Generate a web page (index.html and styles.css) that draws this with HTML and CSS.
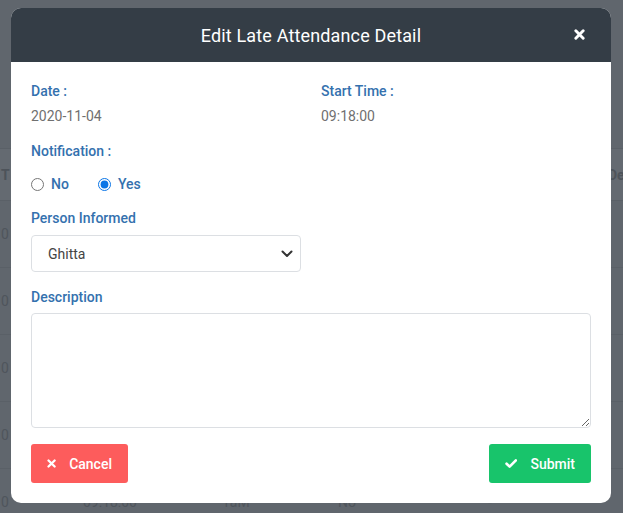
FILE: index.html
```html
<!DOCTYPE html>
<html lang="en">
<head>
<meta charset="utf-8">
<title>Edit Late Attendance Detail</title>
<link rel="stylesheet" href="styles.css">
</head>
<body>
<div class="page">
  <div class="bg-row bg-head"><span class="c1">T</span><span class="c5">De</span></div>
  <div class="bg-row"><span class="c1">0</span></div>
  <div class="bg-row"><span class="c1">0</span></div>
  <div class="bg-row"><span class="c1">0</span></div>
  <div class="bg-row"><span class="c1">0</span></div>
  <div class="bg-row"><span class="c1">0</span><span class="c2">09:18:00</span><span class="c3">1aM</span><span class="c4">No</span><span class="c6">-</span></div>
</div>

<div class="modal">
  <div class="modal-header">
    <h2 class="modal-title">Edit Late Attendance Detail</h2>
    <button class="close" type="button" aria-label="Close">
      <svg width="11" height="11" viewBox="0 0 12 12"><path d="M2 2 L10 10 M10 2 L2 10" stroke="#fff" stroke-width="3.2" stroke-linecap="round"/></svg>
    </button>
  </div>
  <div class="modal-body">
    <div class="grid">
      <div>
        <div class="label">Date :</div>
        <div class="value">2020-11-04</div>
      </div>
      <div>
        <div class="label">Start Time :</div>
        <div class="value">09:18:00</div>
      </div>
    </div>

    <div class="label sec">Notification :</div>
    <div class="radios">
      <label class="radio"><input type="radio" name="notif"> <span>No</span></label>
      <label class="radio"><input type="radio" name="notif" checked> <span>Yes</span></label>
    </div>

    <div class="label sec2">Person Informed</div>
    <div class="select">
      <span>Ghitta</span>
      <svg width="12" height="8" viewBox="0 0 12 8"><path d="M1.5 1.5 L6 6 L10.5 1.5" fill="none" stroke="#333" stroke-width="2" stroke-linecap="round" stroke-linejoin="round"/></svg>
    </div>

    <div class="label sec2">Description</div>
    <textarea class="textarea"></textarea>

    <div class="actions">
      <button class="btn btn-cancel" type="button">
        <svg width="11" height="11" viewBox="0 0 12 12"><path d="M2 2 L10 10 M10 2 L2 10" stroke="#fff" stroke-width="3" stroke-linecap="round"/></svg>
        <span>Cancel</span>
      </button>
      <button class="btn btn-submit" type="button">
        <svg width="14" height="11" viewBox="0 0 14 11"><path d="M1.8 5.8 L5.2 9 L12.2 2" fill="none" stroke="#fff" stroke-width="3" stroke-linecap="round" stroke-linejoin="round"/></svg>
        <span>Submit</span>
      </button>
    </div>
  </div>
</div>
</body>
</html>
```

FILE: styles.css
```css
* { box-sizing: border-box; }
html, body { margin: 0; padding: 0; }
body {
  width: 623px;
  height: 513px;
  overflow: hidden;
  background: #60666d;
  font-family: Roboto, "Liberation Sans", Arial, sans-serif;
  position: relative;
}

/* background page (dimmed) */
.page {
  padding-top: 148px;
  color: #4f555c;
  font-size: 14px;
}
.bg-row {
  height: 67px;
  border-top: 1px solid #5a6067;
  display: flex;
  align-items: center;
  position: relative;
}
.bg-head {
  height: 52px;
  background: #646a71;
  font-weight: 700;
  color: #4d535a;
}
.bg-row span { position: absolute; }
.c1 { left: 1px; }
.c2 { left: 83px; }
.c3 { left: 222px; }
.c4 { left: 338px; }
.c5 { left: 608px; }
.c6 { left: 488px; }

/* modal */
.modal {
  position: absolute;
  left: 11px;
  top: 8px;
  width: 600px;
  background: #fff;
  border-radius: 10px;
  overflow: hidden;
}
.modal-header {
  height: 54px;
  background: #343d46;
  display: flex;
  align-items: center;
  justify-content: center;
  position: relative;
}
.modal-title {
  margin: 0;
  color: #fff;
  font-size: 18px;
  font-weight: 400;
  letter-spacing: 0.15px;
}
.close {
  position: absolute;
  right: 26px;
  top: 21px;
  background: none;
  border: 0;
  padding: 0;
  width: 11px;
  height: 11px;
  display: flex;
}

.modal-body {
  padding: 20px 20px 20px 20px;
}
.grid {
  display: grid;
  grid-template-columns: 270px 270px;
  column-gap: 20px;
}
.label {
  color: #3471ae;
  font-size: 14px;
  line-height: 18px;
  font-weight: 500;
}
.value {
  color: #707070;
  font-size: 14px;
  line-height: 18px;
  margin-top: 7px;
}
.sec { margin-top: 17px; }
.sec2 { margin-top: 16px; }

.radios {
  display: flex;
  align-items: center;
  margin-top: 15px;
  height: 18px;
  gap: 29px;
}
.radio {
  display: flex;
  align-items: center;
  gap: 7px;
  color: #3471ae;
  font-size: 14px;
  font-weight: 500;
}
.radio input {
  margin: 0;
  width: 13px;
  height: 13px;
  accent-color: #0a75e6;
}

.select {
  margin-top: 8px;
  width: 270px;
  height: 37px;
  border: 1px solid #dcdfe3;
  border-radius: 4px;
  display: flex;
  align-items: center;
  justify-content: space-between;
  padding: 0 7px 0 16px;
  font-size: 14px;
  color: #444;
}

.textarea {
  display: block;
  margin-top: 7px;
  width: 560px;
  height: 115px;
  border: 1px solid #dcdfe3;
  border-radius: 4px;
  resize: both;
  font-family: inherit;
}

.actions {
  margin-top: 16px;
  display: flex;
  justify-content: space-between;
}
.btn {
  height: 39px;
  border: 0;
  border-radius: 3px;
  color: #fff;
  font-family: inherit;
  font-size: 14px;
  font-weight: 500;
  display: flex;
  align-items: center;
  padding: 0 16px;
  gap: 13px;
}
.btn-cancel { background: #fd5c5c; width: 97px; }
.btn-submit { background: #18c46b; width: 102px; gap: 13px; }
```
